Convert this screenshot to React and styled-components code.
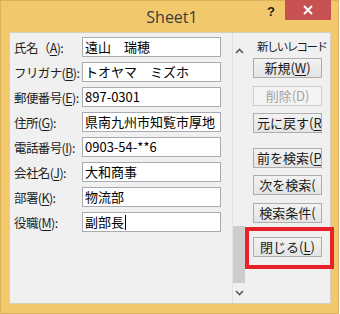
import styled, { createGlobalStyle } from "styled-components";

const GlobalStyle = createGlobalStyle`
  html, body {
    margin: 0;
    padding: 0;
    background: #ffffff;
  }
  body {
    font-family: "Noto Sans CJK JP", "Noto Sans", sans-serif;
  }
`;

const fields = [
  { label: "氏名（", key: "A", tail: "):", value: "遠山　瑞穂" },
  { label: "フリガナ(", key: "B", tail: "):", value: "トオヤマ　ミズホ" },
  { label: "郵便番号(", key: "E", tail: "):", value: "897-0301" },
  { label: "住所(", key: "G", tail: "):", value: "県南九州市知覧市厚地" },
  { label: "電話番号(", key: "I", tail: "):", value: "0903-54-**6" },
  { label: "会社名(", key: "J", tail: "):", value: "大和商事" },
  { label: "部署(", key: "K", tail: "):", value: "物流部" },
  { label: "役職(", key: "M", tail: "):", value: "副部長", focused: true },
];

const buttons = [
  { text: "新規(", key: "W", tail: ")", space: 4 },
  { text: "削除(D)", disabled: true, space: 8 },
  { text: "元に戻す(", key: "R", tail: "", space: 7 },
  { text: "前を検索(", key: "P", tail: "", space: 15 },
  { text: "次を検索(", tail: "", space: 7 },
  { text: "検索条件(", tail: "", space: 8 },
  { text: "閉じる(", key: "L", tail: ")", space: 14 },
];

const App = () => {
  return (
    <>
      <GlobalStyle />
      <Window>
        <TitleBar>
          <Title>Sheet1</Title>
          <HelpMark>?</HelpMark>
          <CloseButton>
            <svg width="10" height="10" viewBox="0 0 10 10">
              <path d="M1 1 L9 9 M9 1 L1 9" stroke="#ffffff" strokeWidth="2" />
            </svg>
          </CloseButton>
        </TitleBar>

        <Content>
          <Form>
            {fields.map((f) => (
              <Row key={f.key}>
                <Label>
                  {f.label}
                  <u>{f.key}</u>
                  {f.tail}
                </Label>
                <Field>
                  {f.value}
                  {f.focused && <Caret />}
                </Field>
              </Row>
            ))}
          </Form>

          <ScrollBar>
            <ArrowBox>
              <svg width="9" height="6" viewBox="0 0 9 6">
                <path d="M1 5 L4.5 1.5 L8 5" stroke="#5a5a5a" strokeWidth="1.6" fill="none" />
              </svg>
            </ArrowBox>
            <Track>
              <Thumb />
            </Track>
            <ArrowBox>
              <svg width="9" height="6" viewBox="0 0 9 6">
                <path d="M1 1 L4.5 4.5 L8 1" stroke="#5a5a5a" strokeWidth="1.6" fill="none" />
              </svg>
            </ArrowBox>
          </ScrollBar>

          <Panel>
            <RecordLabel>新しいレコード</RecordLabel>
            {buttons.map((b) => (
              <CmdButton key={b.text} $space={b.space} $disabled={b.disabled}>
                {b.text}
                {b.key && <u>{b.key}</u>}
                {b.tail}
              </CmdButton>
            ))}
          </Panel>

          {/* annotation frame around the close button */}
          <Highlight />
        </Content>
      </Window>
    </>
  );
};

const Window = styled.div`
  width: 339px;
  height: 314px;
  box-sizing: border-box;
  background: #f1c86b;
  border: 1px solid #d9b25a;
  display: flex;
  flex-direction: column;
  padding: 0 7px 9px 8px;
`;

const TitleBar = styled.div`
  height: 31px;
  display: flex;
  align-items: flex-start;
  position: relative;
  flex-shrink: 0;
`;

const Title = styled.div`
  position: absolute;
  left: 0;
  right: 0;
  top: 5px;
  text-align: center;
  font-family: "Open Sans", "Noto Sans", sans-serif;
  font-size: 16px;
  color: #3c3c3c;
  padding-left: 4px;
`;

const HelpMark = styled.div`
  margin-left: auto;
  margin-right: 10px;
  margin-top: 3px;
  font-family: "Liberation Sans", sans-serif;
  font-weight: bold;
  font-size: 13px;
  color: #222;
  position: relative;
`;

const CloseButton = styled.div`
  width: 46px;
  height: 20px;
  margin-top: -1px;
  background: #c75050;
  display: flex;
  align-items: center;
  justify-content: center;
  position: relative;
`;

const Content = styled.div`
  flex: 1;
  position: relative;
  background: #f0f0f0;
  border: 1px solid #d8cfb8;
  display: grid;
  grid-template-columns: 222px 14px 1fr;
`;

const Form = styled.div`
  display: flex;
  flex-direction: column;
  gap: 5px;
  padding: 4px 0 0 4px;
`;

const Row = styled.div`
  display: flex;
  align-items: center;
  height: 20px;
`;

const Label = styled.div`
  width: 68px;
  flex-shrink: 0;
  font-size: 12.5px;
  color: #1e1e1e;
  white-space: nowrap;
  letter-spacing: -0.6px;

  u {
    text-underline-offset: 2px;
  }
`;

const Field = styled.div`
  width: 139px;
  height: 20px;
  box-sizing: border-box;
  background: #ffffff;
  border: 1px solid #a9abb0;
  font-size: 13px;
  line-height: 18px;
  padding: 0 2px;
  color: #000;
  white-space: nowrap;
  overflow: hidden;
`;

const Caret = styled.span`
  display: inline-block;
  width: 1px;
  height: 15px;
  background: #000;
  vertical-align: -3px;
  margin-left: 1px;
`;

const ScrollBar = styled.div`
  border-left: 1px solid #e2e2e2;
  display: flex;
  flex-direction: column;
  padding: 9px 0 2px;
`;

const ArrowBox = styled.div`
  height: 17px;
  display: flex;
  align-items: center;
  justify-content: center;
`;

const Track = styled.div`
  flex: 1;
  display: flex;
  flex-direction: column;
`;

const Thumb = styled.div`
  margin-top: auto;
  margin-bottom: 1px;
  height: 57px;
  width: 12px;
  background: #cdcdcd;
`;

const Panel = styled.div`
  display: flex;
  flex-direction: column;
  padding: 5px 0 0 7px;
`;

const RecordLabel = styled.div`
  margin-left: 4px;
  height: 16px;
  line-height: 16px;
  font-size: 11.5px;
  letter-spacing: -1.6px;
  color: #1e1e1e;
  white-space: nowrap;
`;

const CmdButton = styled.div`
  margin-top: ${(p) => p.$space}px;
  width: 69px;
  height: 20px;
  box-sizing: border-box;
  border: 1px solid ${(p) => (p.$disabled ? "#cfcfcf" : "#adadad")};
  background: ${(p) =>
    p.$disabled ? "#f4f4f4" : "linear-gradient(#f2f2f2, #e4e4e4)"};
  color: ${(p) => (p.$disabled ? "#a3a3a3" : "#1a1a1a")};
  font-size: 13px;
  line-height: 18px;
  text-align: center;
  white-space: nowrap;
  overflow: hidden;
  padding: 0 3px;

  u {
    text-underline-offset: 2px;
  }
`;

const Highlight = styled.div`
  position: absolute;
  left: 235px;
  top: 194px;
  width: 89px;
  height: 42px;
  box-sizing: border-box;
  border: 4px solid #e8202a;
  pointer-events: none;
`;

export default App;
